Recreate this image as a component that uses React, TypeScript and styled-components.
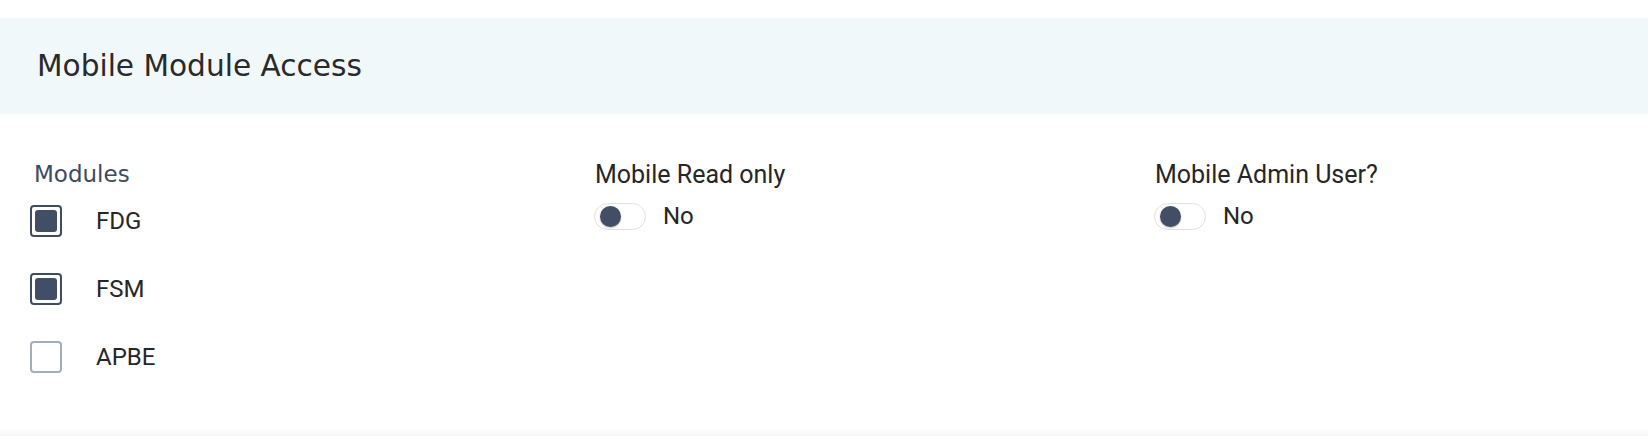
import React, { useState } from "react";
import styled, { createGlobalStyle } from "styled-components";

const Global = createGlobalStyle`
  html, body { margin: 0; padding: 0; background: #ffffff; }
  body { font-family: Roboto, "Liberation Sans", sans-serif; }
`;

const Page = styled.div`
  padding-top: 18px;
  width: 1648px;
  height: 436px;
  box-sizing: border-box;
  display: flex;
  flex-direction: column;
  overflow: hidden;
`;

const Header = styled.div`
  height: 96px;
  background: #f1f8fa;
  display: flex;
  align-items: center;
  padding-left: 37px;
  box-sizing: border-box;
`;

const Title = styled.h2`
  margin: 0;
  font-family: "DejaVu Sans", sans-serif;
  font-weight: 400;
  font-size: 29.6px;
  color: #2a2a2a;
  line-height: normal;
`;

const Body = styled.div`
  flex: 1;
  display: grid;
  grid-template-columns: 564px 560px 1fr;
  padding: 47px 0 0 30px;
  background: linear-gradient(to bottom, #ffffff 0, #ffffff calc(100% - 8px), #f6f6f6 100%);
`;

const Column = styled.div`
  display: flex;
  flex-direction: column;
`;

const GroupLabel = styled.div`
  font-family: "DejaVu Sans", sans-serif;
  font-size: 23px;
  color: #3d4a60;
  line-height: 27px;
  padding-left: 4px;
  margin-bottom: 17px;
`;

const FieldLabel = styled.div`
  font-size: 25px;
  color: #262626;
  line-height: 27px;
  padding-left: 1px;
  margin-bottom: 15px;
`;

const CheckList = styled.div`
  display: flex;
  flex-direction: column;
  gap: 36px;
`;

const CheckRow = styled.label`
  display: flex;
  align-items: center;
  gap: 34px;
  cursor: pointer;
`;

const Box = styled.span<{ $checked: boolean }>`
  width: 32px;
  height: 32px;
  box-sizing: border-box;
  border-radius: 4px;
  border: 2px solid ${(p) => (p.$checked ? "#3f4b61" : "#a3aebb")};
  padding: 3px;
  display: flex;
  background: #fff;
  &::after {
    content: "";
    flex: 1;
    border-radius: 3px;
    background: ${(p) => (p.$checked ? "#414e66" : "transparent")};
  }
`;

const CheckText = styled.span`
  font-size: 24px;
  color: #262626;
  line-height: 27px;
  padding-top: 1px;
`;

const ToggleRow = styled.div`
  display: flex;
  align-items: center;
  gap: 17px;
`;

const Track = styled.button<{ $on: boolean }>`
  width: 52px;
  height: 27px;
  box-sizing: border-box;
  border-radius: 14px;
  border: 1px solid #e0e0e0;
  background: #ffffff;
  padding: 0 0 0 5px;
  display: flex;
  align-items: center;
  justify-content: ${(p) => (p.$on ? "flex-end" : "flex-start")};
  cursor: pointer;
`;

const Knob = styled.span`
  width: 21px;
  height: 21px;
  border-radius: 50%;
  background: #414e66;
  box-shadow: 0 1px 2px rgba(0, 0, 0, 0.25);
`;

const ToggleText = styled.span`
  font-size: 24px;
  color: #262626;
  line-height: 27px;
`;

const modules = [
  { name: "FDG", checked: true },
  { name: "FSM", checked: true },
  { name: "APBE", checked: false },
];

function Toggle({ label }: { label: string }) {
  const [on, setOn] = useState(false);
  return (
    <Column>
      <FieldLabel>{label}</FieldLabel>
      <ToggleRow>
        <Track $on={on} onClick={() => setOn(!on)} aria-pressed={on}>
          <Knob />
        </Track>
        <ToggleText>{on ? "Yes" : "No"}</ToggleText>
      </ToggleRow>
    </Column>
  );
}

export default function App() {
  return (
    <>
      <Global />
      <Page>
        <Header>
          <Title>Mobile Module Access</Title>
        </Header>
        <Body>
          <Column>
            <GroupLabel>Modules</GroupLabel>
            <CheckList>
              {modules.map((m) => (
                <CheckRow key={m.name}>
                  <Box $checked={m.checked} />
                  <CheckText>{m.name}</CheckText>
                </CheckRow>
              ))}
            </CheckList>
          </Column>
          <Toggle label="Mobile Read only" />
          <Toggle label="Mobile Admin User?" />
        </Body>
      </Page>
    </>
  );
}
